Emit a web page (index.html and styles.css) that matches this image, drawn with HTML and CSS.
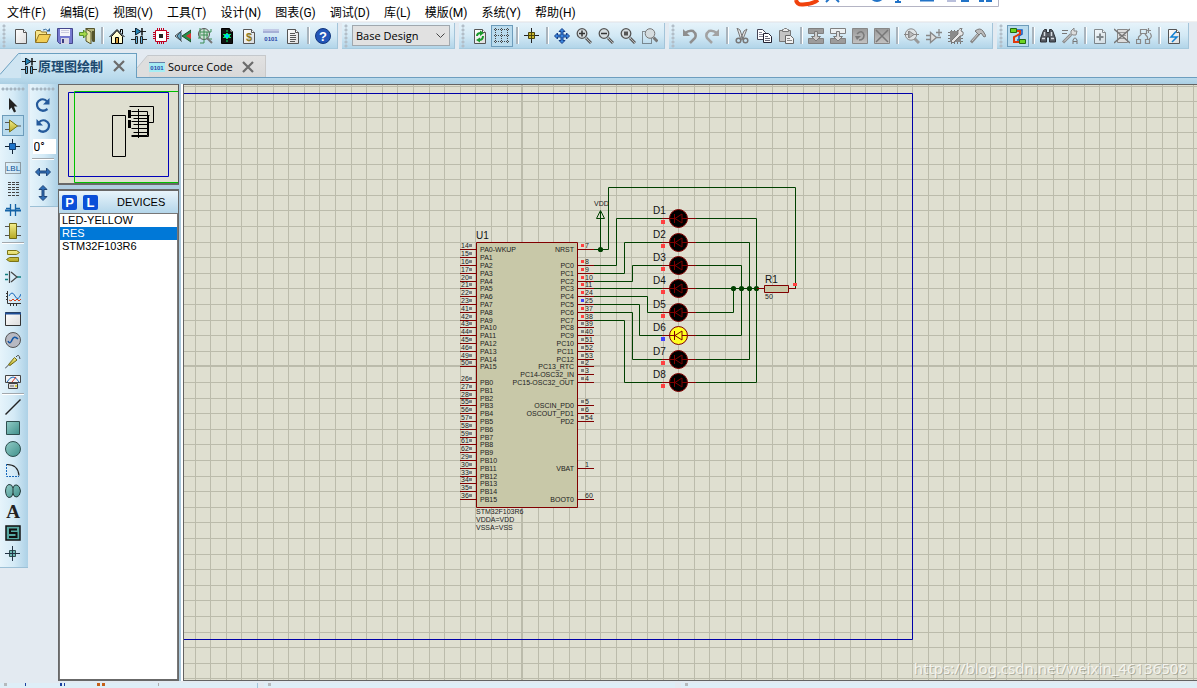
FILE: index.html
```html
<!DOCTYPE html>
<html lang="zh-CN">
<head>
<meta charset="utf-8">
<title>原理图绘制</title>
<link rel="stylesheet" href="styles.css">
</head>
<body>
<svg class="defs" width="0" height="0" aria-hidden="true">
  <defs>
    <linearGradient id="gold" x1="0" y1="0" x2="0" y2="1"><stop offset="0" stop-color="#f4ee8c"/><stop offset="1" stop-color="#b5a822"/></linearGradient>
    <linearGradient id="teal" x1="0" y1="0" x2="1" y2="1"><stop offset="0" stop-color="#93cdc8"/><stop offset="1" stop-color="#3f8f8a"/></linearGradient>
    <linearGradient id="grey" x1="0" y1="0" x2="0" y2="1"><stop offset="0" stop-color="#9a9a9a"/><stop offset="1" stop-color="#c2c2c2"/></linearGradient>
    <linearGradient id="paper" x1="0" y1="0" x2="1" y2="1"><stop offset="0" stop-color="#fff"/><stop offset="1" stop-color="#dcdcdc"/></linearGradient>
    <symbol id="page" viewBox="0 0 16 16"><path d="M2.500 1.500h8l3 3v11h-11z" fill="url(#paper)" stroke="#555"/><path d="M10.500 1.500v3h3" fill="#fff" stroke="#555"/></symbol>
    <symbol id="lens" viewBox="0 0 16 16"><path d="M10 10l5 5" stroke="#5c5c5c" stroke-width="3"/><path d="M10 10l5 5" stroke="#b8b8b8" stroke-width="1"/><circle cx="6" cy="5.500" r="4.800" fill="#d5dcdf" stroke="#555" stroke-width="1.300"/></symbol>
    <symbol id="g-sch" viewBox="0 0 16 16"><path d="M1 3.500h14M0 11.500h5M11 11.500h5" stroke="#222"/><path d="M4.500 0v7l5.500-3.500z" fill="#2386b8" stroke="#123"/><path d="M11 0v7.500" stroke="#111" stroke-width="1.500"/><path d="M4.500 8.500h2v7h-2zM9.500 8.500h2v7h-2z" fill="#5fb0dc" stroke="#222"/></symbol>
    <symbol id="g-x" viewBox="0 0 12 12"><path d="M1 1l10 10M11 1L1 11" stroke="#6c6c6c" stroke-width="2.200"/></symbol>
    <symbol id="led" viewBox="-16 -10 34 20"><path d="M-16 .5h7M9 .5h9" stroke="#800000"/><circle cx=".5" cy=".5" r="9"/><path d="M-9 .5h5M-3.500-4v9M-3 .5l7-4.500v9zM4 .5h5" fill="none" stroke="#800000"/></symbol>
  </defs>
</svg>

<nav class="menu">
  <a href="#">文件(F)</a><a href="#">编辑(E)</a><a href="#">视图(V)</a><a href="#">工具(T)</a><a href="#">设计(N)</a><a href="#">图表(G)</a><a href="#">调试(D)</a><a href="#">库(L)</a><a href="#">模版(M)</a><a href="#">系统(Y)</a><a href="#">帮助(H)</a>
</nav>
<svg class="ime" width="205" height="7" viewBox="0 0 205 7" aria-hidden="true">
  <path d="M0 0h204v6.500H10" fill="#fff"/><path d="M204.500 0v6.500H14" fill="none" stroke="#b4b4c4"/>
  <path d="M2 0q1 5 7 4.500Q19 4 24 0" fill="#fff" stroke="#f0410c" stroke-width="4"/>
  <g fill="none" stroke="#2273c7" stroke-width="2"><path d="M32 2l3-3M42-1l3 3M77-2q6 6 12 0M104-1v3M101 2h6M126 .5h14"/></g>
  <path d="M153 0h9v2h-9z" fill="#b9bfdc"/><path d="M167 0h8v2h-8zM185 0h5v2h-5zM192 0h6v2h-6z" fill="#2273c7"/>
</svg>

<header class="bars">
  <div class="bar">
    <i class="grip"></i>
    <button aria-label="新建"><svg viewBox="0 0 16 16"><use href="#page"/></svg></button>
    <button aria-label="打开"><svg viewBox="0 0 16 16"><path d="M.5 14V3.500l1-1h4l1 1.500h5V7" fill="#f7e58c" stroke="#907424"/><path d="M.5 14.500L4 6.500h11.500L12 14.500z" fill="#f2ce55" stroke="#907424"/><path d="M8 2q3-2 5 1" fill="none" stroke="#376b9e"/><path d="M11.500 3.500h3.500V0z" fill="#376b9e"/></svg></button>
    <button aria-label="保存"><svg viewBox="0 0 16 16"><path d="M.5.5h15v15h-13l-2-2z" fill="#7679cf" stroke="#45488e"/><path d="M3 1h10v7H3z" fill="#f4f4fa"/><path d="M4 2.500h8M4 4.500h8" stroke="#cacade"/><path d="M4 10h8v6H4z" fill="#d6d6e4"/><path d="M5 11h2v4H5z" fill="#3a3d82"/></svg></button>
    <button aria-label="退出"><svg viewBox="0 0 16 16"><path d="M6.500.5h9v13h-2M8 1v13" fill="#b2b27a" stroke="#55552d"/><path d="M7 1l5 3v12l-5-3z" fill="#e6e4a8" stroke="#55552d"/><path d="M14 3v10" stroke="#55552d" stroke-width="2"/><path d="M.5 4.500h4V2l4 4-4 4V7.500h-4z" fill="#a4d84a" stroke="#3f7b16" stroke-width=".8"/></svg></button>
    <i class="sep"></i>
    <button aria-label="主页"><svg viewBox="0 0 16 16"><path d="M2.500 8.500L8 2.500l5.500 6v7h-11z" fill="#fffbd0" stroke="#000"/><path d="M.5 9L8 1.500 15.500 9M11.500 4V1.500h2V6" fill="none" stroke="#000"/><path d="M6.500 9.500h3v6h-3z" fill="#d59c3a" stroke="#000"/></svg></button>
    <button aria-label="原理图"><svg viewBox="0 0 16 16"><use href="#g-sch"/></svg></button>
    <button aria-label="PCB"><svg viewBox="0 0 16 16"><path d="M4.500 0v16M6.500 0v16M8.500 0v16M10.500 0v16M0 4.500h16M0 6.500h16M0 8.500h16M0 10.500h16" stroke="#c00020"/><path d="M2.500 2.500h11v11h-11z" fill="#fff" stroke="#c00020"/><path d="M6 6h4v4H6z" fill="#222"/></svg></button>
    <button aria-label="3D"><svg viewBox="0 0 16 16"><path d="M7 2.500L0 8l7 5.500" fill="none" stroke="#444"/><path d="M2 8l3-3.500h1v7H5z" fill="#69a9c6" stroke="#2b4a5a"/><path d="M7 8l9-6v12z" fill="#23924a" stroke="#204b28"/><path d="M11 8l5-3v6z" fill="#d33"/></svg></button>
    <button aria-label="Gerber"><svg viewBox="0 0 16 16"><circle cx="7" cy="6" r="5.500" fill="#cfe0d8" stroke="#555"/><path d="M3 0v10H1M3 4h11V1M7 1v14H3M10 4v7h5M4 7h7" fill="none" stroke="#3b8d52"/><path d="M10 10l5 5" stroke="#777" stroke-width="2"/></svg></button>
    <button aria-label="设计浏览"><svg viewBox="0 0 16 16"><path d="M2.500.5h8l3 3v12h-11z" fill="#111" stroke="#000"/><path d="M11 1v3h3" fill="#fff" stroke="#000"/><path d="M8 2v2M8 12v2M4 6.500h2M4 9.500h2M10 6.500h2M10 9.500h2" stroke="#0e6"/><path d="M8 5l3 3-3 3-3-3z" fill="#0cf" stroke="#0e6"/></svg></button>
    <button aria-label="物料清单"><svg viewBox="0 0 16 16"><use href="#page"/><text x="8" y="13" class="dollar">$</text></svg></button>
    <button aria-label="源代码"><svg viewBox="0 0 16 16"><path d="M0 1h16v4H0z" fill="#a6b0d6"/><path d="M0 2h16" stroke="#dfe4f6"/><text x="8" y="13" class="bits">0101</text></svg></button>
    <button aria-label="项目说明"><svg viewBox="0 0 16 16"><use href="#page"/><path d="M5 5.500h5M5 7.500h6M5 9.500h6M5 11.500h6M5 13.500h5" stroke="#555"/></svg></button>
    <i class="sep"></i>
    <button aria-label="帮助"><svg viewBox="0 0 16 16"><circle cx="8" cy="8" r="7.500" fill="#2355b8" stroke="#12387e"/><text x="8" y="13" class="help">?</text></svg></button>
  </div>
  <div class="bar">
    <i class="grip"></i>
    <label class="pick"><select aria-label="设计变体"><option>Base Design</option></select><svg width="9" height="6" viewBox="0 0 9 6"><path d="M.5.5l4 4 4-4" fill="none" stroke="#444"/></svg></label>
  </div>
  <div class="bar">
    <i class="grip"></i>
    <button aria-label="刷新"><svg viewBox="0 0 16 16"><use href="#page"/><path d="M5 8q0-3 4-3M11 8q0 4-4 4" fill="none" stroke="#189a2c" stroke-width="2"/><path d="M8 2.500L12 5 8 8zM8 9.500v5L4 12z" fill="#189a2c"/></svg></button>
    <button class="on" aria-label="网格"><svg viewBox="0 0 16 16"><path d="M1.500 0v16M7.500 0v16M13.500 0v16M0 1.500h16M0 7.500h16M0 13.500h16" stroke="#444" stroke-dasharray="1 1"/></svg></button>
    <i class="sep"></i>
    <button aria-label="原点"><svg viewBox="0 0 16 16"><path d="M7.500 0v15M0 7.500h15" stroke="#222"/><path d="M4.500 4.500h6v6h-6z" fill="#cbb82a" stroke="#4a4510"/><path d="M7.500 4v7M4 7.500h7" stroke="#4a4510"/></svg></button>
    <i class="sep"></i>
    <button aria-label="平移"><svg viewBox="0 0 16 16"><path d="M8 .5l3 3H9v3.500h3.500V5l3 3-3 3V9H9v3.500h2l-3 3-3-3h2V9H3.500v2l-3-3 3-3v2H7V3.500H5z" fill="#3a86e0" stroke="#153e86"/></svg></button>
    <button aria-label="放大"><svg viewBox="0 0 16 16"><use href="#lens"/><path d="M3 5.500h6M6 2.500v6" stroke="#333" stroke-width="1.500"/></svg></button>
    <button aria-label="缩小"><svg viewBox="0 0 16 16"><use href="#lens"/><path d="M3 5.500h6" stroke="#333" stroke-width="1.500"/></svg></button>
    <button aria-label="全部"><svg viewBox="0 0 16 16"><use href="#lens"/><path d="M4 3.500h4v4H4z" fill="#555"/></svg></button>
    <button aria-label="区域"><svg viewBox="0 0 16 16"><path d="M.5 3.500h9v12h-9z" fill="none" stroke="#333" stroke-dasharray="1 1"/><g transform="translate(2 0)"><circle cx="6" cy="5.500" r="4.800" fill="#d5dcdf" stroke="#777"/><path d="M9.500 9.500l4 4" stroke="#777" stroke-width="3"/></g></svg></button>
  </div>
  <div class="bar">
    <i class="grip"></i>
    <button aria-label="撤销"><svg viewBox="0 0 16 16"><path d="M3 5q4-3 8-2 4 3 2 7l-5 5" fill="none" stroke="#8f8f8f" stroke-width="2.500"/><path d="M1 1v7h7z" fill="#8f8f8f"/></svg></button>
    <button aria-label="重做"><svg viewBox="0 0 16 16"><path d="M13 5Q9 2 5 3q-4 3-2 7l5 5" fill="none" stroke="#a2a2a2" stroke-width="2.500"/><path d="M15 1v7H8z" fill="#a2a2a2"/></svg></button>
    <i class="sep"></i>
    <button aria-label="剪切"><svg viewBox="0 0 16 16"><path d="M3 0l3 2 3 9-2 1zM13 1l-3 2-3 7 2 1z" fill="#e4e4e4" stroke="#777"/><circle cx="4.500" cy="12.500" r="2.300" fill="none" stroke="#777" stroke-width="1.500"/><circle cx="11.500" cy="12.500" r="2.300" fill="none" stroke="#777" stroke-width="1.500"/></svg></button>
    <button aria-label="复制"><svg viewBox="0 0 16 16"><path d="M1.500 1.500h5l3 3v7h-8z" fill="#fff" stroke="#445"/><path d="M3 4.500h3M3 6.500h4M3 8.500h4" stroke="#889"/><path d="M7.500 5.500h5l3 3v6h-8z" fill="#fff" stroke="#223"/><path d="M9 8.500h3M9 10.500h5M9 12.500h5" stroke="#667"/></svg></button>
    <button aria-label="粘贴"><svg viewBox="0 0 16 16"><path d="M1.500 2.500h11v11h-11z" fill="#c4c4c4" stroke="#777"/><path d="M4.500 3.500v-2h1l1-1h2l1 1h1v2z" fill="#eee" stroke="#777"/><path d="M7.500 7.500h5l3 3v5h-8z" fill="#f2f2f2" stroke="#666"/><path d="M9 10.500h3M9 12.500h5" stroke="#888"/></svg></button>
    <i class="sep"></i>
    <button aria-label="块复制"><svg viewBox="0 0 16 16"><path d="M.5.5h15v5h-15zM.5 10.500h15v5h-15z" fill="#9c9c9c" stroke="#808080"/><path d="M6.500 3.500h3v5h3L8 13 3.500 8.500h3z" fill="#ccc" stroke="#7a7a7a"/></svg></button>
    <button aria-label="块移动"><svg viewBox="0 0 16 16"><path d="M.5.5h15v5h-15z" fill="#ecf0f2" stroke="#808080"/><path d="M.5 10.500h15v5h-15z" fill="#9c9c9c" stroke="#808080"/><path d="M6.500 3.500h3v5h3L8 13 3.500 8.500h3z" fill="#ddd" stroke="#7a7a7a"/></svg></button>
    <button aria-label="块旋转"><svg viewBox="0 0 16 16"><path d="M.5.5h15v15H.5z" fill="url(#grey)" stroke="#888"/><path d="M5 6q5-5 7 1 0 5-5 5" fill="none" stroke="#7a7a7a" stroke-width="1.500"/><path d="M3 8h6L5 12z" fill="#7a7a7a"/></svg></button>
    <button aria-label="块删除"><svg viewBox="0 0 16 16"><path d="M.5.5h15v15H.5z" fill="url(#grey)" stroke="#888"/><path d="M2 2l12 12M14 2L2 14" stroke="#777" stroke-width="1.500"/></svg></button>
    <i class="sep"></i>
    <button aria-label="拾取"><svg viewBox="0 0 16 16"><path d="M10 10l5 5" stroke="#999" stroke-width="3"/><circle cx="7" cy="6.500" r="5.700" fill="#dfe3e5" stroke="#8a8a8a"/><path d="M0 6.500h4M10 6.500h5M4.500 3v7M5 3l5 3.500L5 10z" fill="#bbb" stroke="#888"/></svg></button>
    <button aria-label="制作器件"><svg viewBox="0 0 16 16"><path d="M0 7.500h4M0 11.500h4M10 9.500h5M4.500 4.500v10l6-5zM10 4.500h6M13 1v7" fill="#ddd" stroke="#888" stroke-width="1.300"/></svg></button>
    <button aria-label="封装"><svg viewBox="0 0 16 16"><path d="M3.500 2v14M6.500 2v14M9.500 2v14M12.500 2v14M0 4.500h15M0 7.500h15M0 10.500h15M0 13.500h15" stroke="#777"/><path d="M2 3h11v11H2z" fill="#8a8a8a"/><path d="M3 13l7-7q-1-5 4-6l-1 3 2 1q1 4-3 4l-7 7z" fill="#e6e6e6" stroke="#777"/></svg></button>
    <button aria-label="分解"><svg viewBox="0 0 16 16"><path d="M1 14.500l8-9" stroke="#888" stroke-width="3"/><path d="M2 13l6-7" stroke="#ccc"/><path d="M5 3q5-4 8 0l3 5-2 1-3-4-2 2z" fill="#bbb" stroke="#777"/></svg></button>
  </div>
  <div class="bar">
    <i class="grip"></i>
    <button class="on" aria-label="自动布线"><svg viewBox="0 0 16 16"><path d="M6 2h6v4L9 8v4H7" fill="none" stroke="#155cc0" stroke-width="1.500"/><path d="M6 3h4v3L4 9v5h6" fill="none" stroke="#e0380c" stroke-width="2"/><path d="M.5.5h6v4h-6zM9.500 11.500h6v4h-6z" fill="#6bd422" stroke="#24690e"/></svg></button>
    <i class="sep"></i>
    <button aria-label="查找"><svg viewBox="0 0 16 16"><path d="M3.500 2.500l1-1h2v3h3v-3h2l1 1 3 8v3.500h-6V9h-3v5h-6v-3.500z" fill="#555a62" stroke="#2c3036"/><path d="M2 10.500h3M11 10.500h3M4.500 4v4M11.500 4v4" stroke="#d5dbe0" stroke-width="1.500"/></svg></button>
    <button aria-label="属性分配"><svg viewBox="0 0 16 16"><path d="M0 2.500h6M0 5.500h5" stroke="#777"/><path d="M1 14.500l8-8" stroke="#888" stroke-width="3"/><path d="M2 13.500l7-7" stroke="#ddd"/><path d="M9 6V3l3-3 0 3 3 0-1 4h-3z" fill="#ddd" stroke="#888"/><path d="M11 16v-4l1.500-2h1l1.500 2v4M11 13.500h4" fill="none" stroke="#777"/></svg></button>
    <i class="sep"></i>
    <button aria-label="新建图纸"><svg viewBox="0 0 16 16" opacity=".65"><use href="#page"/><path d="M4.500 9h7M8 5.500v7" stroke="#555" stroke-width="2"/></svg></button>
    <button aria-label="删除图纸"><svg viewBox="0 0 16 16"><path d="M3.500 1.500h10v13h-10z" fill="#ddd" stroke="#888"/><path d="M5 4.500h7M5 7.500h7M5 10.500h7" stroke="#999"/><path d="M0 1l16 14M16 1L0 15" stroke="#777" stroke-width="1.500"/></svg></button>
    <button aria-label="层次"><svg viewBox="0 0 16 16"><path d="M4.500 1.500h6v4h-6zM.5 11.500h4v4h-4zM9.500 11.500h4v4h-4zM2.500 11V9l3-3M11.500 11V9L9 6M10 2.500h5M12.500 0v5M14 5q3 4-1 6" fill="none" stroke="#888" stroke-width="1.200"/></svg></button>
    <i class="sep"></i>
    <button aria-label="电气检查"><svg viewBox="0 0 16 16"><use href="#page"/><path d="M10 3.500L5 9h6l-5 5" fill="none" stroke="#1181d4" stroke-width="1.500"/></svg></button>
  </div>
</header>

<div class="tabs" role="tablist">
  <div class="tab active"><svg class="slope" width="21" height="25" viewBox="0 0 21 25"><path d="M0 25V21.500L18.500.5H21V25z" fill="#cfe5f2"/><path d="M0 21.500L18.500.5H21" fill="none" stroke="#6a9fc0"/></svg>
    <button role="tab" aria-selected="true"><svg width="16" height="16"><use href="#g-sch"/></svg>原理图绘制</button><button class="close" aria-label="关闭"><svg width="12" height="12"><use href="#g-x"/></svg></button></div>
  <div class="tab"><svg class="slope" width="12" height="22" viewBox="0 0 12 22"><path d="M0 22V13L10.500.5H12V22z" fill="#dedede"/><path d="M0 13L10.500.5H12" fill="none" stroke="#c4c8cc"/></svg>
    <button role="tab" aria-selected="false"><svg width="16" height="12" viewBox="0 0 16 12"><path d="M0 1h16v10H0z" fill="#a5ecf3"/><path d="M0 1.500h16" stroke="#667fa8"/><text x="8" y="9" class="bits">0101</text></svg>Source Code</button><button class="close" aria-label="关闭"><svg width="12" height="12"><use href="#g-x"/></svg></button></div>
</div>
<div class="strip"></div>

<main class="work">
  <div class="modes">
    <i class="hgrip"></i>
    <button aria-label="选择"><svg viewBox="0 0 16 16"><path d="M4 1l8.500 8.500H9l2 5-2 1-2.500-5L4 13z" fill="#222"/></svg></button>
    <button class="on" aria-label="元件"><svg viewBox="0 0 16 16"><path d="M0 4.500h5M0 11.500h5M12 8h4" stroke="#555"/><path d="M4.500 2v12l8-6z" fill="url(#gold)" stroke="#7b7416"/></svg></button>
    <button aria-label="节点"><svg viewBox="0 0 16 16"><path d="M7.500 0v15M0 7.500h15" stroke="#123"/><path d="M4.500 4.500h6v6h-6z" fill="#1d75ca" stroke="#123f74"/></svg></button>
    <button aria-label="标签"><svg viewBox="0 0 16 16"><path d="M.5 2.500h15v11H.5z" fill="none" stroke="#555" stroke-dasharray="1 1"/><text x="8" y="11" class="lbl">LBL</text></svg></button>
    <button aria-label="文本脚本"><svg viewBox="0 0 16 16"><path d="M3 1.500h11M3 3.500h11M3 6.500h11M3 8.500h11M3 11.500h11M3 14.500h11" stroke="#444" stroke-dasharray="3 1"/></svg></button>
    <button aria-label="总线"><svg viewBox="0 0 16 16"><path d="M0 8.500h16" stroke="#1463a6" stroke-width="2"/><path d="M5.500 2v12M10.500 2v12M1 6.500h4M11 6.500h4" stroke="#1463a6" stroke-width="1.300"/></svg></button>
    <button aria-label="子电路"><svg viewBox="0 0 16 16"><path d="M0 3.500h16M0 12.500h16" stroke="#555"/><path d="M4.500.5h7v15h-7z" fill="url(#gold)" stroke="#6f6816"/></svg></button>
    <i class="hsep"></i>
    <button aria-label="终端"><svg viewBox="0 0 16 16"><path d="M2.500 2.500h9l3 2-3 2h-9zM13.500 9.500h-9l-3 2 3 2h9z" fill="url(#gold)" stroke="#7b7416"/></svg></button>
    <button aria-label="引脚"><svg viewBox="0 0 16 16"><path d="M0 5.500h3M0 10.500h3M12 8h4" stroke="#128080" stroke-width="1.500"/><path d="M4.500 2v12M6 3l6 5-6 5" fill="none" stroke="#444" stroke-width="1.200"/></svg></button>
    <button aria-label="图表"><svg viewBox="0 0 16 16"><path d="M2.500 1v12.500H16M1 3.500h1M1 6.500h1M1 9.500h1M5.500 14v2M8.500 14v2M11.500 14v2" fill="none" stroke="#333"/><path d="M4 6q3-6 6 0t6-2" fill="none" stroke="#1768bb"/><path d="M4 10l2 1 2-2 2 2 2-2 2 2 2-2" fill="none" stroke="#d34018"/></svg></button>
    <button aria-label="窗口"><svg viewBox="0 0 16 16"><path d="M.5 1.500h15v13H.5z" fill="url(#paper)" stroke="#333"/><path d="M0 2.500h16" stroke="#1f4f98" stroke-width="2"/></svg></button>
    <button aria-label="激励源"><svg viewBox="0 0 16 16"><circle cx="8" cy="8" r="7.500" fill="#b7b9c2" stroke="#555"/><path d="M3 9q2 4 4-1t6-1" fill="none" stroke="#1457a5" stroke-width="1.600"/></svg></button>
    <button aria-label="探针"><svg viewBox="0 0 16 16"><path d="M0 15.500l4-4M11 4q3-4 4 2" fill="none" stroke="#444"/><path d="M3.500 11.500l6-7 2.500 2.500-7 5.500z" fill="url(#gold)" stroke="#6f6816"/></svg></button>
    <button aria-label="仪表"><svg viewBox="0 0 16 16"><path d="M.5 1.500h15v7H.5z" fill="#f3f3f3" stroke="#444"/><path d="M2 8q6-10 12 0" fill="none" stroke="#1768bb"/><path d="M7 8l4-5" stroke="#d32"/><path d="M3.500 9.500h9v5h-9z" fill="#e0e0e0" stroke="#444"/><path d="M5 12h4" stroke="#666"/><path d="M10 11h2v2h-2z" fill="#d9ce3e"/></svg></button>
    <i class="hsep"></i>
    <button aria-label="直线"><svg viewBox="0 0 16 16"><path d="M.5 15.500l15-15" stroke="#222" stroke-width="1.400"/></svg></button>
    <button aria-label="方框"><svg viewBox="0 0 16 16"><path d="M1.500 1.500h13v13h-13z" fill="url(#teal)" stroke="#2f4f4f"/></svg></button>
    <button aria-label="圆"><svg viewBox="0 0 16 16"><circle cx="8" cy="8" r="7.500" fill="url(#teal)" stroke="#2f4f4f"/></svg></button>
    <button aria-label="弧"><svg viewBox="0 0 16 16"><path d="M1.500 2v12.500H14" fill="none" stroke="#1768bb" stroke-dasharray="2 1"/><path d="M2 2.500q11 0 12 11" fill="none" stroke="#222" stroke-width="1.200"/></svg></button>
    <button aria-label="路径"><svg viewBox="0 0 16 16"><path d="M8 5q-1-4-4-3.500Q1 2 .5 8 1 14 4 14.500q3 .5 4-4 1 4 4 3.500 3-1 3.500-6Q15 3 12 2 9 1 8 5z" fill="url(#teal)" stroke="#263c3c"/><path d="M8 5v6" stroke="#263c3c"/></svg></button>
    <button class="letter" aria-label="文字">A</button>
    <button aria-label="符号"><svg viewBox="0 0 16 16"><path d="M1 1h14v14H1z" fill="#57aaa4" stroke="#111" stroke-width="1.500"/><path d="M12 4.500H5v3.500h6.500v4H4" fill="none" stroke="#111" stroke-width="2"/></svg></button>
    <button aria-label="标记"><svg viewBox="0 0 16 16"><path d="M7.500 0v15M0 7.500h15" stroke="#234"/><path d="M4.500 4.500h6v6h-6z" fill="#70b9b4" stroke="#2f4f4f"/><path d="M7.500 4v7M4 7.500h7" stroke="#234"/></svg></button>
  </div>
  <div class="modes orient">
    <i class="hgrip"></i>
    <button aria-label="顺时针"><svg viewBox="0 0 16 16"><path d="M12.500 12Q7 16 3 11 0 5 6 2.500q4-1 6 2" fill="none" stroke="#255a9b" stroke-width="2.200"/><path d="M14.500 1v6.500H8z" fill="#255a9b"/></svg></button>
    <button aria-label="逆时针"><svg viewBox="0 0 16 16"><path d="M3.500 12Q9 16 13 11q3-6-3-8.500-4-1-6 2" fill="none" stroke="#255a9b" stroke-width="2.200"/><path d="M1.500 1v6.500H8z" fill="#255a9b"/></svg></button>
    <input type="text" value="0°" aria-label="角度">
    <i class="hsep"></i>
    <button aria-label="水平镜像"><svg viewBox="0 0 16 16"><path d="M.5 8l4-4v3h7V4l4 4-4 4V9h-7v3z" fill="#2e6db5" stroke="#204678"/></svg></button>
    <button aria-label="垂直镜像"><svg viewBox="0 0 16 16"><path d="M8 .5l4 4H9v7h3l-4 4-4-4h3v-7H4z" fill="#2e6db5" stroke="#204678"/></svg></button>
  </div>

  <aside class="side">
    <div class="overview">
      <svg width="119" height="98" aria-label="概览">
        <g transform="translate(-59 -85)" fill="none">
          <path d="M68.500 92.500h100v84h-100z" stroke="#0000b8"/>
          <path d="M180 91.500H74.500v91H180" stroke="#00c000"/>
          <g stroke="#000"><path d="M112.500 115.500h13v41h-13zM129.500 106.500h24v16h-5M131.500 111.500h16v24h-16M129.500 115.500h20M133.500 118.500h15M131.500 121.500h17M133.500 124.500h14M131.500 128.500h17M133.500 132.500h15M131.500 136.500h17v-21M138.500 109v29"/><path d="M129.500 110v8M129.500 120v8" stroke-width="3"/></g>
        </g>
      </svg>
    </div>
    <section class="devices">
      <header><button>P</button><button>L</button><h2>DEVICES</h2></header>
      <ul><li>LED-YELLOW</li><li class="sel">RES</li><li>STM32F103R6</li></ul>
    </section>
  </aside>

  <section class="sheet">
    <svg class="drawing" width="100%" height="100%" aria-label="原理图">
      <g transform="translate(-184 -85)">
        <g id="grid"></g>
        <path d="M184 93.500h728.500v546H184" class="edge"/>
        <g class="wire">
          <path d="M594 249.500h14.500V187.500h187v101M600.500 249V218"/>
          <path d="M594 265.500h22.500v-47H663M695 218.500h61.500v164H695"/>
          <path d="M594 273.500h30.500v-31H663M695 242.500h54.500v117H695"/>
          <path d="M594 281.500h38.500v-16H663M695 265.500h46.500v70H695"/>
          <path d="M594 288.500h69M695 288.500h62M733.500 288v24.500H695"/>
          <path d="M594 296.500h53.500v16H663"/>
          <path d="M594 304.500h45.500v31H663"/>
          <path d="M594 312.500h38.500v47H663"/>
          <path d="M594 320.500h30.500v62H663"/>
          <path d="M600.500 210.500l-4 8h8zM600.500 211v8"/>
        </g>
        <g fill="#004000"><circle cx="600.500" cy="249.500" r="2.600"/><circle cx="733.500" cy="288.500" r="2.600"/><circle cx="741.500" cy="288.500" r="2.600"/><circle cx="749.500" cy="288.500" r="2.600"/><circle cx="756.500" cy="288.500" r="2.600"/></g>
        <path d="M476.500 242.500h101v265h-101z" class="body"/>
        <path d="M757 288.500h7M789 288.500h7" stroke="#800000"/>
        <path d="M764.500 285.500h24v7h-24z" class="body"/>
        <path d="M793 283h4v3h-4z" fill="#ff4040"/>
        <g id="leds"></g>
        <g id="pins"></g>
        <text x="476" y="239" class="ref">U1</text>
        <text x="765" y="283" class="ref">R1</text>
        <text x="765" y="299" class="pin">50</text>
        <text x="594" y="206" class="pin">VDD</text>
        <text x="476" y="514" class="pin">STM32F103R6</text>
        <text x="476" y="522" class="pin">VDDA=VDD</text>
        <text x="476" y="530" class="pin">VSSA=VSS</text>
      </g>
    </svg>
    <div class="mark">https://blog.csdn.net/weixin_46136508</div>
  </section>
</main>
<footer class="foot"><div class="sim"><i></i><svg width="200" height="3" aria-hidden="true"><path d="M15 0h1v3h-1zM50 0h2v3h-2zM54 0h1v3h-1z" fill="#1a3f9e"/><path d="M87 0h3v3h-3zM92 0h3v3h-3z" fill="#c46018"/><path d="M148 0h1v3h-1z" fill="#aaa"/></svg></div><div class="msg"><i></i></div><div class="msg"><i></i></div></footer>
<script src="schematic.js"></script>
</body>
</html>
```
FILE: styles.css
```css
* { box-sizing: border-box; }
body {
  margin: 0;
  height: 100vh;
  display: flex;
  flex-direction: column;
  overflow: hidden;
  background: #e3eaf1;
  color: #000;
  font: 12px/16px Roboto, "Noto Sans CJK SC", sans-serif;
}
button { border: 0; padding: 0; margin: 0; background: none; font: inherit; color: inherit; }
.defs { position: absolute; }

.menu { display: flex; gap: 14px; height: 21px; flex: none; padding: 4px 7px 0; background: #fff; }
.menu a { color: #000; text-decoration: none; line-height: 18px; white-space: nowrap; }
.ime { position: absolute; left: 794px; top: 0; }

.bars { display: flex; gap: 4px; padding-top: 1px; flex: none; height: 28px; border-top: 1px solid #f0f0f0; }
.bar {
  display: flex;
  align-items: center;
  padding-right: 3px;
  border-right: 1px solid #a3c4d9;
  border-bottom: 1px solid #a6cade;
  background: linear-gradient(#e6f3fa, #d3e9f5 50%, #b2d5e9);
}
.bar button { width: 22px; height: 22px; display: grid; place-items: center; }
.bar button svg, .modes button svg { width: 16px; height: 16px; display: block; }
.bar .on, .modes .on { border: 1px solid #6d9cbb; background: #b9dbed; }
.grip { width: 10px; height: 24px; flex: none; background: radial-gradient(circle, #b2bec8 1px, transparent 2px) 2px 0 / 4px 4px repeat-y; }
.sep { width: 8px; height: 17px; flex: none; }
.sep::before { content: ""; display: block; width: 2px; height: 17px; margin-left: 3px; background: #a9b4bd; border-right: 1px solid #fff; }
.pick { display: grid; align-items: center; width: 98px; margin-right: 1px; }
.pick select, .pick svg { grid-area: 1 / 1; }
.pick select { appearance: none; width: 98px; height: 21px; padding: 0 3px; margin: 0; border: 1px solid #a0a8ae; border-radius: 0; background: #e1e1e1; font: 11px/16px "Open Sans", sans-serif; color: #000; }
.pick svg { justify-self: end; margin-right: 5px; pointer-events: none; }
.dollar { font: bold 11px "Liberation Sans", sans-serif; fill: #8d7a20; text-anchor: middle; }
.bits { font: bold 6px "Liberation Sans", sans-serif; fill: #2a46a8; text-anchor: middle; }
.help { font: bold 13px "Liberation Sans", sans-serif; fill: #fff; text-anchor: middle; }
.lbl { font: 8px "Liberation Sans", sans-serif; fill: #0a4f94; text-anchor: middle; }

.tabs { display: flex; align-items: flex-end; height: 28px; flex: none; }
.tab { display: flex; height: 22px; border-right: 1px solid #c9c9c9; font: 11px/16px "Open Sans", sans-serif; }
.tab button { display: flex; align-items: center; gap: 3px; border-top: 1px solid #c4c8cc; background: linear-gradient(#e2e2e2, #d8d8d8); }
.tab .close { padding: 0 11px 0 9px; }
.tab.active { height: 25px; margin-bottom: -1px; z-index: 1; border-color: #6a9fc0; color: #1d4a70; font: bold 13px/16px "Noto Sans CJK SC", sans-serif; }
.tab.active button { gap: 1px; border-color: #6a9fc0; background: linear-gradient(#dceef8, #b9daec); }
.tab.active .close { padding: 0 11px 0 10px; }
.slope { flex: none; }
.strip { flex: none; height: 7px; background: linear-gradient(#b9daec, #abcfe3); border-top: 1px solid #6d9ebf; }

.work { flex: 1; min-height: 0; display: flex; align-items: flex-start; }
.modes {
  display: flex;
  flex-direction: column;
  align-items: center;
  width: 28px;
  padding: 0 2px 3px 0;
  flex: none;
  border-bottom: 1px solid #9cc0d6;
  background: linear-gradient(90deg, #e6f4fb, #d4eaf6 50%, #add1e6);
}
.modes button { width: 22px; height: 21px; display: grid; place-items: center; }
.orient { margin-left: 2px; }
.hgrip { width: 24px; height: 10px; background: radial-gradient(circle, #a4b4c0 1px, transparent 2px) 0 3px / 4px 4px repeat-x; }
.hsep { width: 22px; height: 2px; margin: 1px 0; background: #a2a8ad; border-bottom: 1px solid #fff; }
.modes .letter { font: bold 19px/20px "Liberation Serif", serif; color: #222; }
.orient input { width: 23px; height: 15px; margin: 3px 0 3px 2px; border: 0; padding: 0 1px; font: inherit; background: #fff; }

.side { width: 121px; align-self: stretch; flex: none; display: flex; flex-direction: column; gap: 4px; background: #b0cde0; }
.overview { flex: none; border: 1px solid #686868; border-bottom-width: 2px; border-right-color: #555; background: #dfdfd0; }
.overview svg { display: block; }
.devices { flex: 1; display: flex; flex-direction: column; border: 1px solid #686868; border-width: 2px 1px 2px 1px; background: #fff; }
.devices header { display: flex; align-items: center; gap: 6px; height: 23px; padding: 0 3px; background: linear-gradient(#e8f4fb, #b4d6ea); border-bottom: 1px solid #777; }
.devices header button { width: 15px; height: 15px; border-radius: 2px; background: #0a4fd8; color: #fff; font: bold 13px/15px "Liberation Sans", sans-serif; }
.devices h2 { margin: 0; flex: 1; padding-left: 13px; font: 11px/14px "Liberation Sans", sans-serif; }
.devices ul { margin: 0; padding: 0; list-style: none; flex: 1; border: 1px solid #777; border-width: 0 1px; font: 11px/13px "Liberation Sans", sans-serif; }
.devices li { padding-left: 2px; }
.sel { background: #0078d7; color: #fff; }

.sheet { flex: 1; min-width: 0; align-self: stretch; display: grid; margin-left: 4px; border: 1px solid #636363; border-right: 0; background: #dfdfd0; overflow: hidden; box-shadow: -2px 0 0 #fff, -4px 0 0 #aac8dc; }
.drawing { grid-area: 1 / 1; display: block; }
.mark { grid-area: 1 / 1; align-self: end; justify-self: end; padding: 0 10px 3px 0; font: 15px/18px "Noto Sans", sans-serif; color: rgba(250, 250, 246, .85); text-shadow: 1px 1px 0 rgba(130, 130, 115, .5); }
.edge { fill: none; stroke: #0000a8; }
.wire { fill: none; stroke: #004000; }
.body { fill: #c8c8a8; stroke: #800000; }
.lead { stroke: #800000; }
.pin { font: 7px "Liberation Sans", sans-serif; fill: #222; }
.end { text-anchor: end; }
.ref { font: 10px "Liberation Sans", sans-serif; fill: #111; }
.grid-line { fill: #bbbbab; }

.foot { flex: none; height: 7px; padding-top: 2px; display: flex; gap: 6px; overflow: hidden; }
.foot div { display: flex; gap: 3px; padding-left: 4px; background: #deeef7; }
.foot i { width: 3px; height: 3px; background: #b5b9bc; }
.sim { width: 258px; border-right: 1px solid #a3c4d9; }
.foot .msg { width: 411px; }
.foot .msg:last-child { flex: 1; }
```
FILE: schematic.js
```js
const NS = 'http://www.w3.org/2000/svg';
function add(parent, tag, attrs, text) {
  const el = document.createElementNS(NS, tag);
  for (const key in attrs) el.setAttribute(key, attrs[key]);
  if (text) el.textContent = text;
  parent.appendChild(el);
  return el;
}

// Grid, with a heavier line through the sheet's centre.
const grid = document.getElementById('grid');
for (let k = -21; k < 130; k++) {
  const size = k === 0 ? 2 : 1;
  add(grid, 'rect', { x: Math.round(522.2 + 15.6 * k) - size + 1, y: 85, width: size, height: 2000, class: 'grid-line' });
}
for (let k = -18; k < 110; k++) {
  const size = k === 0 ? 2 : 1;
  add(grid, 'rect', { x: 184, y: Math.round(366.4 + 15.6 * k) - size + 1, width: 2400, height: size, class: 'grid-line' });
}

// Pins of U1.
const pins = document.getElementById('pins');
const rowY = row => Math.round(249.4 + 7.8 * row);
const RED = '#ff4040', BLUE = '#4040ff', GREY = '#808080';
function leftPin(row, name, num) {
  const y = rowY(row);
  add(pins, 'path', { d: `M460 ${y + 0.5}h16`, class: 'lead' });
  add(pins, 'rect', { x: 469, y: y - 5, width: 3, height: 3, fill: GREY });
  add(pins, 'text', { x: 461, y: y - 1, class: 'pin' }, num);
  add(pins, 'text', { x: 480, y: y + 3, class: 'pin' }, name);
}
function rightPin(row, name, num, color) {
  const y = rowY(row);
  add(pins, 'path', { d: `M578 ${y + 0.5}h16`, class: 'lead' });
  if (color) add(pins, 'rect', { x: 581, y: y - 5, width: 3, height: 3, fill: color });
  add(pins, 'text', { x: 585, y: y - 1, class: 'pin' }, num);
  add(pins, 'text', { x: 574, y: y + 3, class: 'pin end' }, name);
}
[14, 15, 16, 17, 20, 21, 22, 23, 41, 42, 43, 44, 45, 46, 49, 50]
  .forEach((num, i) => leftPin(i, i ? 'PA' + i : 'PA0-WKUP', num));
[26, 27, 28, 55, 56, 57, 58, 59, 61, 62, 29, 30, 33, 34, 35, 36]
  .forEach((num, i) => leftPin(17 + i, 'PB' + i, num));
[
  [0, 'NRST', 7, RED], [2, 'PC0', 8, RED], [3, 'PC1', 9, RED], [4, 'PC2', 10, RED],
  [5, 'PC3', 11, RED], [6, 'PC4', 24, RED], [7, 'PC5', 25, BLUE], [8, 'PC6', 37, RED],
  [9, 'PC7', 38, RED], [10, 'PC8', 39, GREY], [11, 'PC9', 40, GREY], [12, 'PC10', 51, GREY],
  [13, 'PC11', 52, GREY], [14, 'PC12', 53, GREY], [15, 'PC13_RTC', 2, GREY],
  [16, 'PC14-OSC32_IN', 3, GREY], [17, 'PC15-OSC32_OUT', 4, GREY],
  [20, 'OSCIN_PD0', 5, GREY], [21, 'OSCOUT_PD1', 6, GREY], [22, 'PD2', 54, GREY],
  [28, 'VBAT', 1, null], [32, 'BOOT0', 60, null]
].forEach(p => rightPin(...p));

// LED column.
const leds = document.getElementById('leds');
[218, 242, 265, 288, 312, 335, 359, 382].forEach((y, i) => {
  const lit = i === 5;
  add(leds, 'use', { href: '#led', x: 662, y: y - 10, width: 34, height: 20, fill: lit ? '#ffff20' : '#000', stroke: '#800000' });
  add(leds, 'rect', { x: 661, y: y + 2, width: 4, height: 4, fill: lit ? BLUE : RED });
  add(leds, 'text', { x: 653, y: y - 4, class: 'ref' }, 'D' + (i + 1));
});
```
